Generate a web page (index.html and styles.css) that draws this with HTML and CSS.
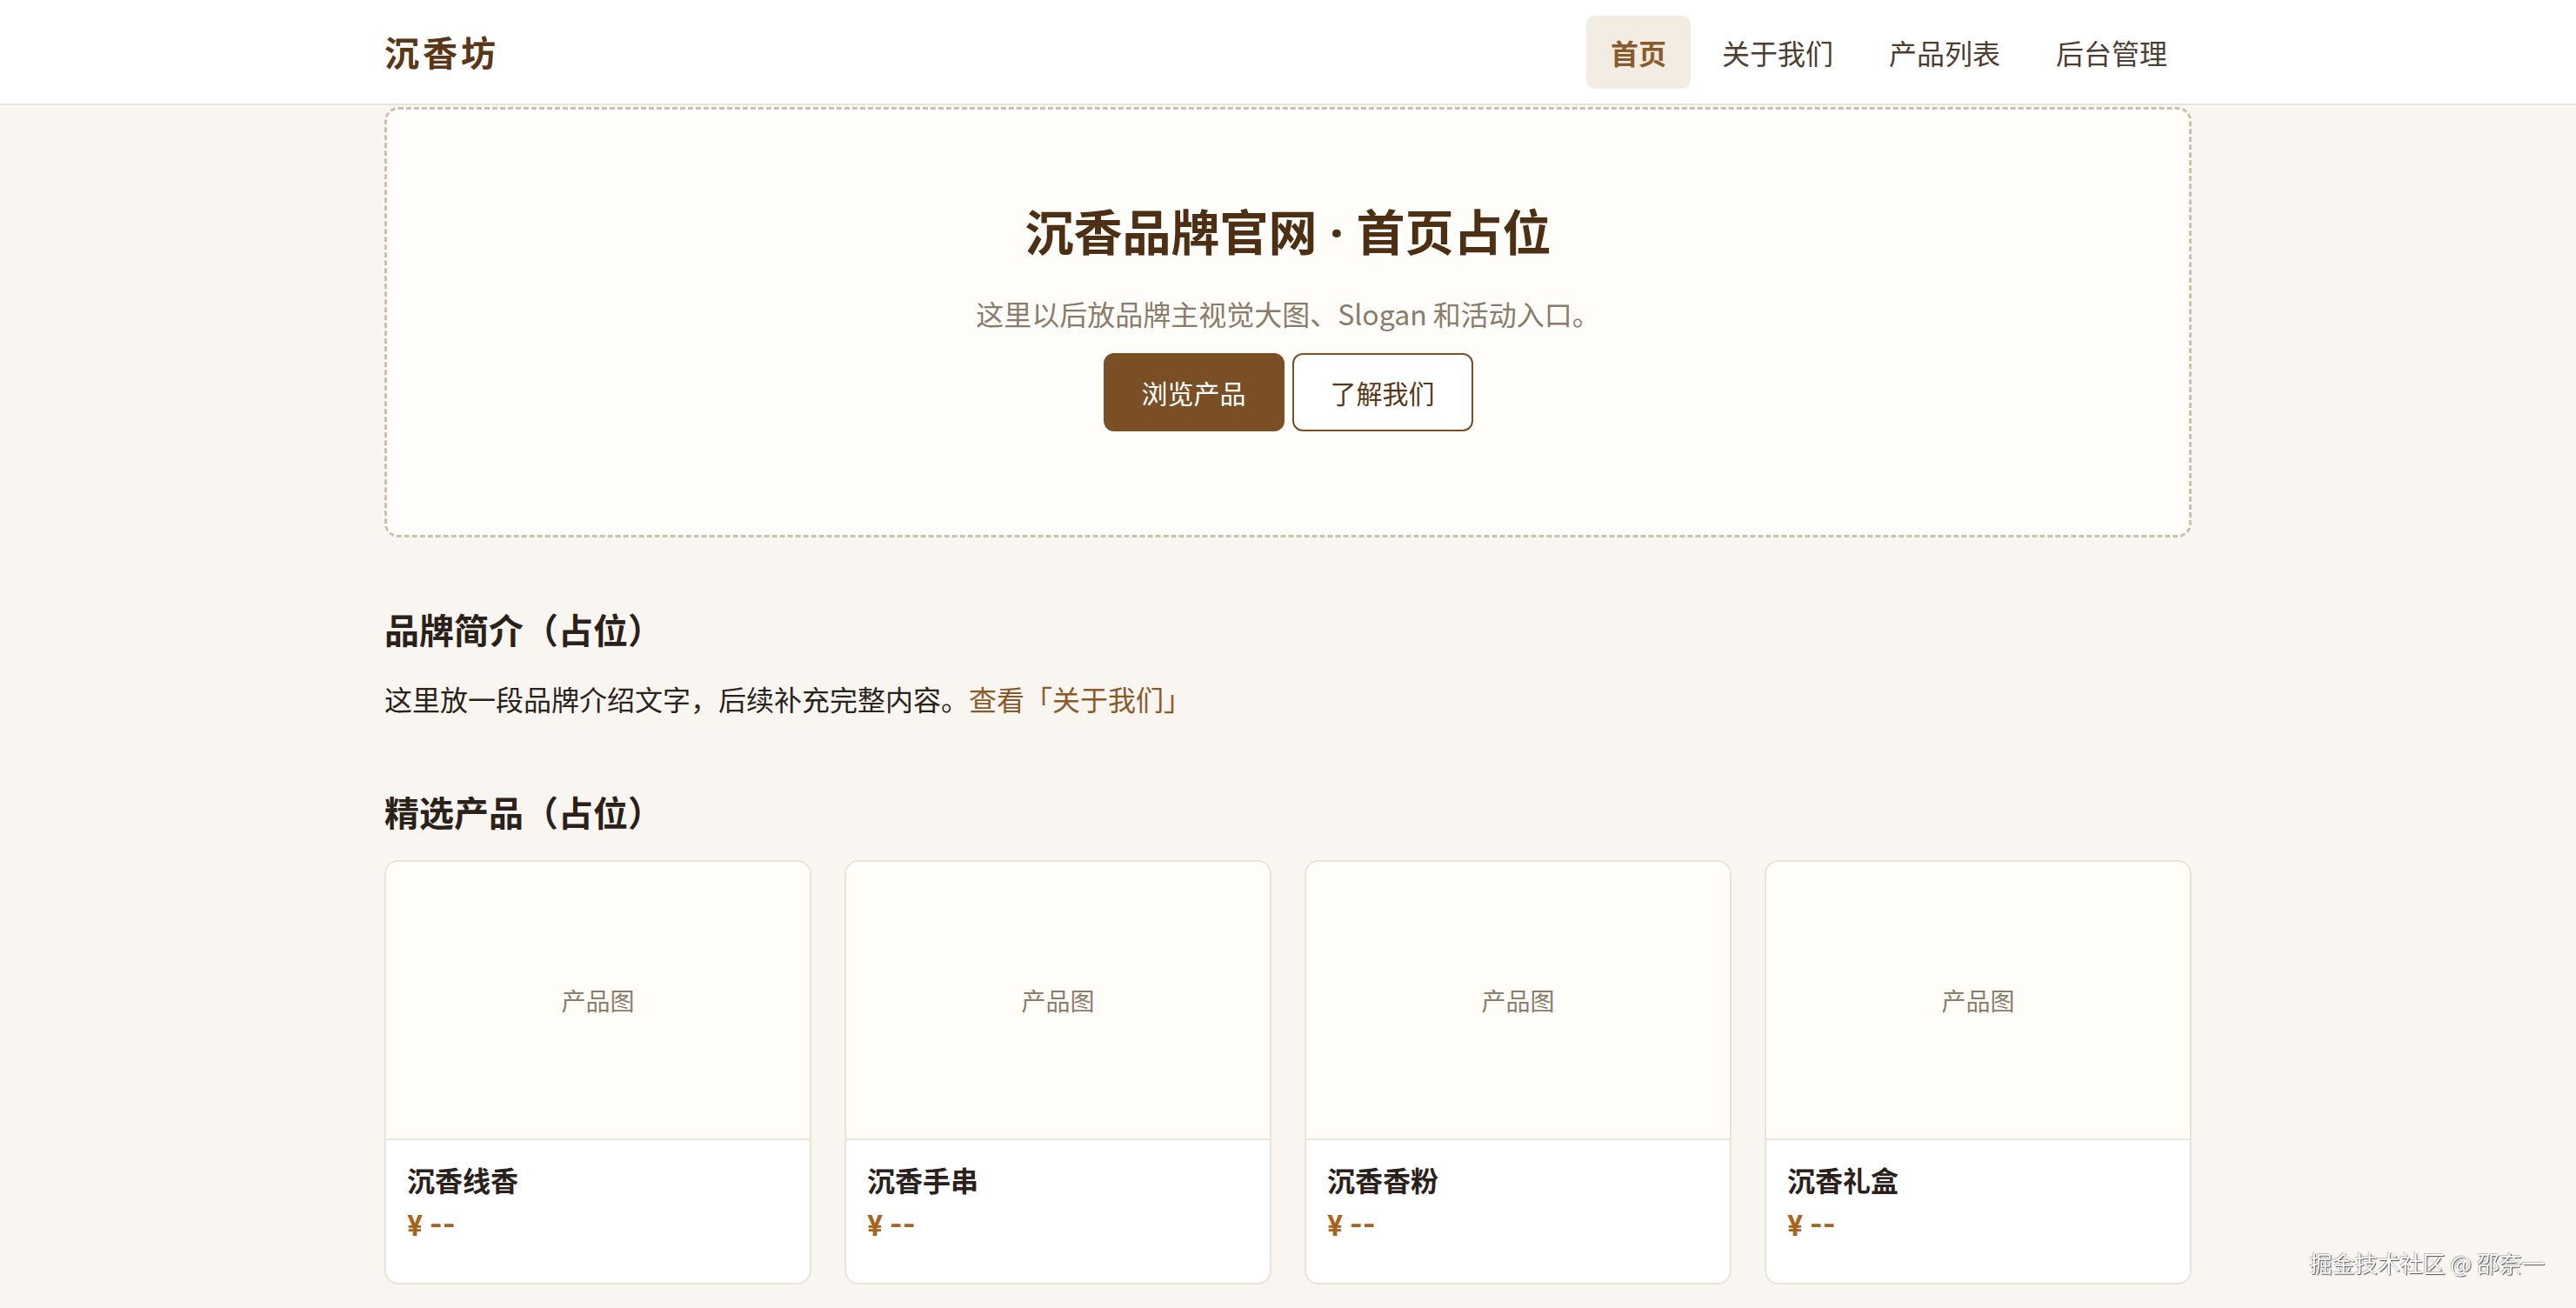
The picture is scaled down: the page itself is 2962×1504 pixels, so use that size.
FILE: index.html
```html
<!DOCTYPE html>
<html lang="zh-CN">
<head>
<meta charset="utf-8"/>
<title>沉香坊</title>
<link rel="stylesheet" href="styles.css">
</head>
<body>
<header class="site-header">
  <div class="wrap header-inner">
    <a class="logo" href="#">沉香坊</a>
    <nav class="nav">
      <a class="nav-item active" href="#">首页</a>
      <a class="nav-item" href="#">关于我们</a>
      <a class="nav-item" href="#">产品列表</a>
      <a class="nav-item" href="#">后台管理</a>
    </nav>
  </div>
</header>

<main class="wrap">
  <section class="hero">
    <h1>沉香品牌官网<span class="dot"> · </span>首页占位</h1>
    <p class="hero-sub">这里以后放品牌主视觉大图、Slogan 和活动入口。</p>
    <div class="hero-actions">
      <a class="btn btn-primary" href="#">浏览产品</a>
      <a class="btn btn-outline" href="#">了解我们</a>
    </div>
  </section>

  <section class="block">
    <h2>品牌简介（占位）</h2>
    <p class="intro">这里放一段品牌介绍文字，后续补充完整内容。<a href="#">查看「关于我们」</a></p>
  </section>

  <section class="block">
    <h2>精选产品（占位）</h2>
    <div class="products">
      <div class="card">
        <div class="card-img">产品图</div>
        <div class="card-body">
          <div class="card-name">沉香线香</div>
          <div class="card-price">¥ --</div>
        </div>
      </div>
      <div class="card">
        <div class="card-img">产品图</div>
        <div class="card-body">
          <div class="card-name">沉香手串</div>
          <div class="card-price">¥ --</div>
        </div>
      </div>
      <div class="card">
        <div class="card-img">产品图</div>
        <div class="card-body">
          <div class="card-name">沉香香粉</div>
          <div class="card-price">¥ --</div>
        </div>
      </div>
      <div class="card">
        <div class="card-img">产品图</div>
        <div class="card-body">
          <div class="card-name">沉香礼盒</div>
          <div class="card-price">¥ --</div>
        </div>
      </div>
    </div>
  </section>
</main>

<div class="watermark">掘金技术社区 @ 邵奈一</div>
</body>
</html>
```

FILE: styles.css
```css
* { box-sizing: border-box; }
body {
  margin: 0;
  background: #f9f6f1;
  color: #2b221b;
  font-family: "Noto Sans CJK SC", "Noto Sans", sans-serif;
  overflow: hidden;
}
a { text-decoration: none; }
.wrap { width: 2078px; margin: 0 auto; }

/* header */
.site-header {
  background: #fff;
  border-bottom: 2px solid #ebe4da;
}
.header-inner {
  height: 119px;
  display: flex;
  align-items: center;
  justify-content: space-between;
}
.logo {
  margin-top: -2px;
  font-size: 40px;
  font-weight: 700;
  letter-spacing: 4px;
  color: #5a3817;
}
.nav { display: flex; gap: 8px; }
.nav-item {
  font-size: 32px;
  line-height: 44px;
  padding: 20px 28px;
  border-radius: 10px;
  color: #4d3d30;
}
.nav-item.active {
  background: #f3ece3;
  color: #8a5a2b;
  font-weight: 700;
}

/* hero */
.hero {
  margin-top: 2px;
  height: 495px;
  padding-top: 101px;
  border: 3px dashed #cdbfab;
  border-radius: 16px;
  background: #fffdf9;
  text-align: center;
}
.hero h1 {
  margin: 0 0 33px;
  font-size: 56px;
  line-height: 73px;
  font-weight: 700;
  color: #4d2f14;
}
.hero h1 .dot { font-family: "Noto Sans", sans-serif; }
.hero-sub {
  margin: 0 0 22px;
  font-size: 32px;
  line-height: 48px;
  color: #8b7b6b;
}
.hero-actions { display: flex; justify-content: center; gap: 9px; }
.btn {
  font-size: 30px;
  line-height: 42px;
  padding: 22px 42px;
  border: 2px solid #7b4f26;
  border-radius: 12px;
}
.btn-primary { background: #7b4f26; color: #fff; }
.btn-outline { background: #fff; color: #5a3817; }

/* sections */
.block h2 {
  margin: 77px 0 0;
  font-size: 40px;
  line-height: 56px;
  font-weight: 700;
  color: #2b211a;
}
.intro {
  margin: 27px 0 0;
  font-size: 32px;
  line-height: 50px;
}
.intro a { color: #8a5a2b; }

/* product cards */
.products {
  margin-top: 28px;
  display: grid;
  grid-template-columns: repeat(4, 1fr);
  gap: 38px;
}
.card {
  height: 488px;
  background: #fff;
  border: 2px solid #e9e4d8;
  border-radius: 16px;
  overflow: hidden;
}
.card-img {
  height: 320px;
  display: flex;
  align-items: center;
  justify-content: center;
  background: #fffdf8;
  border-bottom: 2px solid #ebe6dc;
  font-size: 28px;
  color: #8c7c6c;
}
.card-body { padding: 23px 24px; }
.card-name {
  font-size: 32px;
  line-height: 44px;
  font-weight: 700;
  color: #2b211a;
}
.card-price {
  margin-top: 11px;
  font-family: "Inter", "Noto Sans CJK SC", sans-serif;
  font-size: 32px;
  line-height: 42px;
  font-weight: 700;
  color: #a8631f;
}

.watermark {
  position: fixed;
  right: 36px;
  bottom: 34px;
  font-size: 26px;
  color: #fff;
  text-shadow: 1px 1px 1px #555, -1px -1px 0 #bbb;
}
```
